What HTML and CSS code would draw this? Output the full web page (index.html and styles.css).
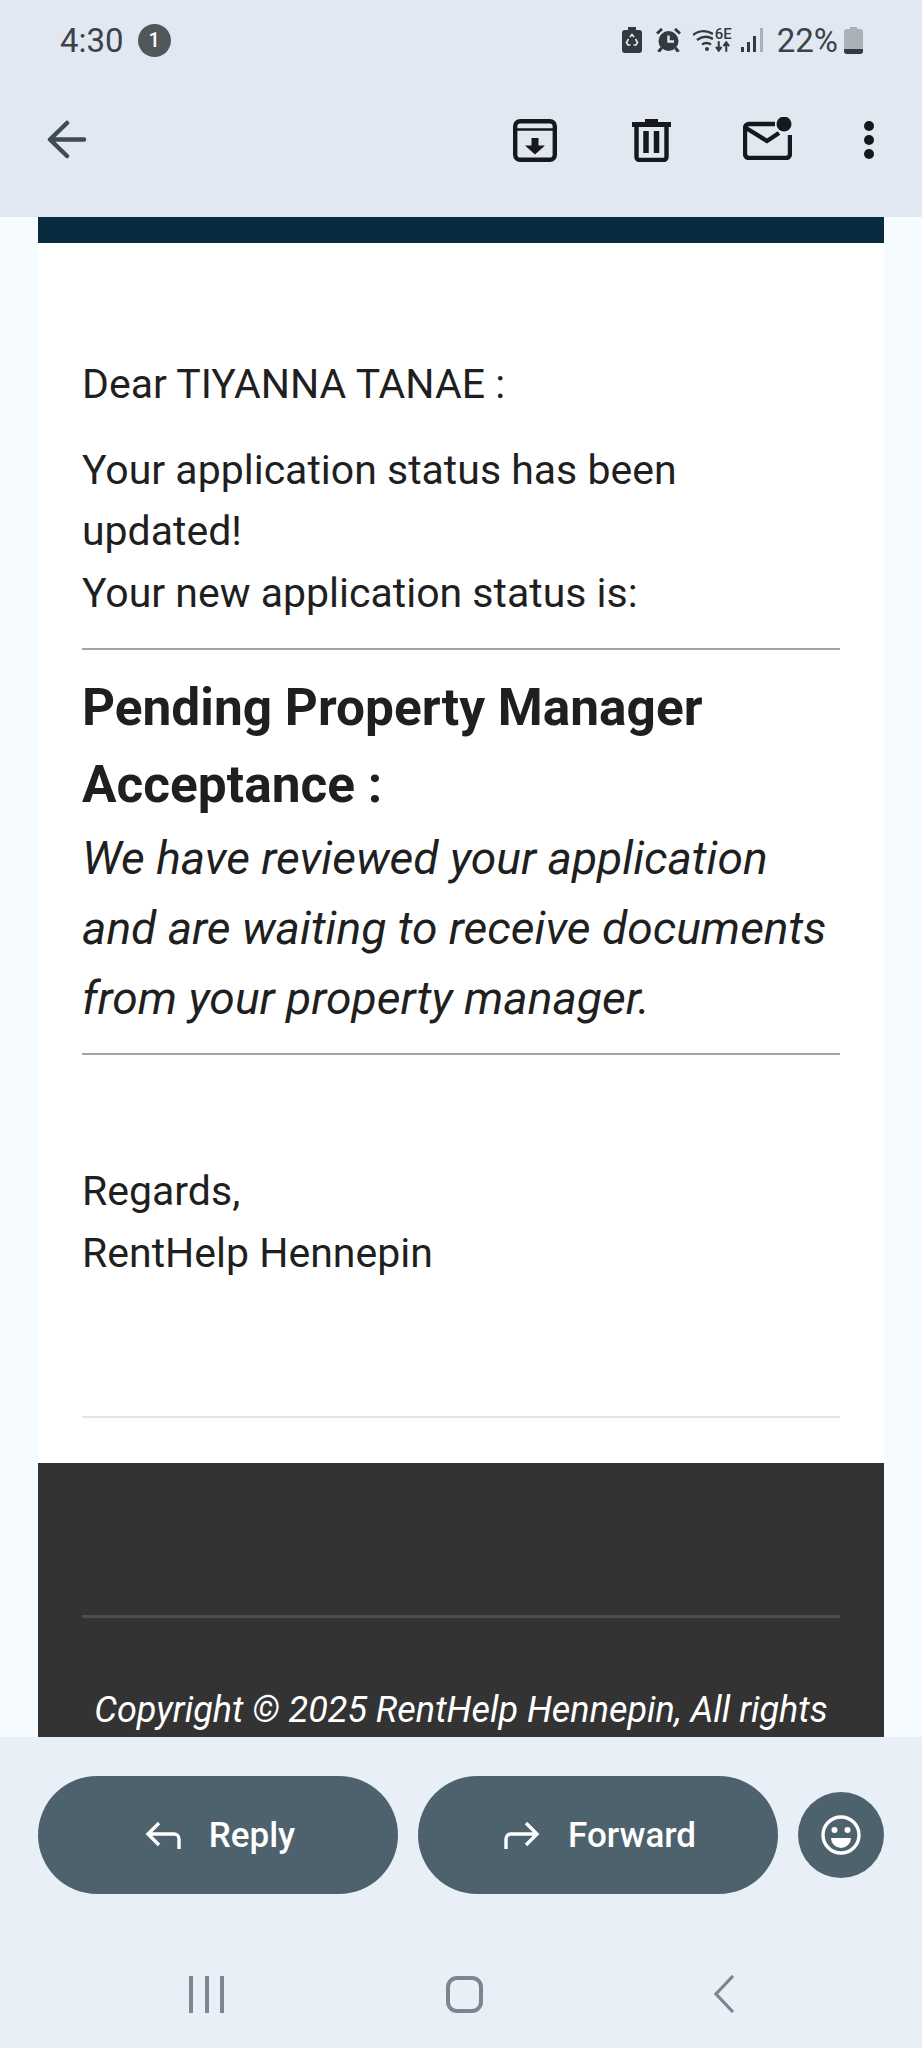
FILE: index.html
```html
<!DOCTYPE html>
<html lang="en">
<head>
  <meta charset="UTF-8">
  <title>RentHelp Hennepin - Application status</title>
  <meta name="viewport" content="width=device-width, initial-scale=1">
  <link rel="stylesheet" href="styles.css">
</head>
<body>
  <div class="phone">
    <header class="top">
      <div class="status-bar">
        <div class="status-left">
          <span class="clock">4:30</span>
          <span class="notif-badge">1</span>
        </div>
        <div class="status-right">
          <svg class="st-recycle" viewBox="0 0 20 26"><path fill="#33393f" d="M6 0h8v3h3a3 3 0 0 1 3 3v17a3 3 0 0 1-3 3H3a3 3 0 0 1-3-3V6a3 3 0 0 1 3-3h3z"/><path fill="none" stroke="#e1e8f1" stroke-width="1.700" d="M8 10l2-2.500 2 2.500M13.500 12l2 3.500-1.500 2.500h-2.500M6.500 12l-2 3.500 1.500 2.500h2.500"/></svg>
          <svg class="st-alarm" viewBox="0 0 25 24"><circle cx="12.500" cy="13" r="10" fill="#33393f"/><path d="M12.500 7.500v6h5.500" fill="none" stroke="#e1e8f1" stroke-width="2.400"/><path d="M1 5.500l5-4.500M24 5.500l-5-4.500M5.500 20l-3 4M19.500 20l3 4" stroke="#33393f" stroke-width="3"/></svg>
          <svg class="st-wifi" viewBox="0 0 20 24"><path d="M0 7c6-5 14-5 20-1M4 12c5-4 11-4 16-1M9 16.500c3-2 6-2 9 0" fill="none" stroke="#33393f" stroke-width="2.400"/><circle cx="14" cy="21" r="2" fill="#33393f"/></svg>
          <div class="st-net">
            <span class="st-6e">6E</span>
            <svg viewBox="0 0 16 11"><path d="M4 0v9M1 6l3 4 3-4M12 11V2M9 5l3-4 3 4" fill="none" stroke="#33393f" stroke-width="2.200"/></svg>
          </div>
          <svg class="st-signal" viewBox="0 0 23 24"><rect x="0" y="19" width="3" height="5" fill="#33393f"/><rect x="6" y="14" width="3" height="10" fill="#33393f"/><rect x="12" y="8" width="3" height="16" fill="#33393f"/><rect x="19" y="0" width="3" height="24" fill="#a9afb6"/></svg>
          <span class="battery-pct">22%</span>
          <svg class="st-battery" viewBox="0 0 19 27"><path fill="#abb1b8" d="M6 0h7v2h3a3 3 0 0 1 3 3v19a3 3 0 0 1-3 3H3a3 3 0 0 1-3-3V5a3 3 0 0 1 3-3h3z"/><path fill="#33393f" d="M0 22h19v2a3 3 0 0 1-3 3H3a3 3 0 0 1-3-3z"/></svg>
        </div>
      </div>
      <div class="toolbar">
        <svg class="tool-back" viewBox="0 0 40 40"><path d="M37 19.500H4M20 3L3 19.500 20 36" fill="none" stroke="#3e4a54" stroke-width="4.500" stroke-linecap="round" stroke-linejoin="round"/></svg>
        <div class="tool-actions">
          <svg class="tool-archive" viewBox="0 0 44 43"><rect x="2.200" y="2.200" width="39.600" height="38.600" rx="5" fill="none" stroke="#15191d" stroke-width="4.400"/><path d="M2 10.500h40" stroke="#15191d" stroke-width="2.500"/><path d="M18.500 19h7v7.500h6.500l-10 9-10-9h6.500z" fill="#15191d"/></svg>
          <svg class="tool-trash" viewBox="0 0 39 43"><path d="M0 5.500h39" stroke="#15191d" stroke-width="5"/><path d="M13 1.500h13" stroke="#15191d" stroke-width="3"/><path d="M4.500 6v32a3 3 0 0 0 3 3h24a3 3 0 0 0 3-3V6" fill="none" stroke="#15191d" stroke-width="4.400"/><path d="M14 12v22M24.500 12v22" stroke="#15191d" stroke-width="5.500"/></svg>
          <svg class="tool-mail" viewBox="0 0 49 43"><path d="M32 7H6a4 4 0 0 0-4 4v26a4 4 0 0 0 4 4h37a4 4 0 0 0 4-4V18" fill="none" stroke="#15191d" stroke-width="4.400"/><path d="M3 11l21 13 12-8" fill="none" stroke="#15191d" stroke-width="4.400"/><circle cx="41" cy="7" r="7.500" fill="#15191d"/></svg>
          <div class="tool-more"><i></i><i></i><i></i></div>
        </div>
      </div>
    </header>

    <main class="mail">
      <div class="card">
        <div class="card-strip"></div>
        <div class="card-body">
          <p class="greet">Dear TIYANNA TANAE :</p>
          <p class="intro">Your application status has been updated!<br>Your new application status is:</p>
          <hr class="rule">
          <h2 class="status-title">Pending Property Manager Acceptance :</h2>
          <p class="status-desc">We have reviewed your application and are waiting to receive documents from your property manager.</p>
          <hr class="rule rule-after">
          <p class="regards">Regards,<br>RentHelp Hennepin</p>
          <hr class="rule rule-light">
        </div>
        <footer class="card-foot">
          <hr class="foot-rule">
          <p class="copyright">Copyright © 2025 RentHelp Hennepin, All rights</p>
        </footer>
      </div>
    </main>

    <div class="actions">
      <button class="pill">
        <svg viewBox="0 0 36 27"><path d="M34 27V17a5 5 0 0 0-5-5H3M14 1L3 12l11 11" fill="none" stroke="#fff" stroke-width="3.400"/></svg>
        Reply
      </button>
      <button class="pill">
        <svg viewBox="0 0 36 27"><path d="M2 27V17a5 5 0 0 1 5-5h26M22 1l11 11-11 11" fill="none" stroke="#fff" stroke-width="3.400"/></svg>
        Forward
      </button>
      <button class="emoji-btn">
        <svg viewBox="0 0 40 40"><circle cx="20" cy="20" r="18" fill="none" stroke="#fff" stroke-width="3.400"/><circle cx="13.500" cy="15" r="3" fill="#fff"/><circle cx="26.500" cy="15" r="3" fill="#fff"/><path d="M10 23h20a10 10 0 0 1-20 0z" fill="#fff"/></svg>
      </button>
    </div>

    <nav class="nav-bar">
      <div class="nav-recent"><i></i><i></i><i></i></div>
      <div class="nav-home"></div>
      <svg class="nav-back" viewBox="0 0 22 38"><path d="M20 1L3 19l17 18" fill="none" stroke="#7c8690" stroke-width="3.200"/></svg>
    </nav>
  </div>
</body>
</html>
```

FILE: styles.css
```css
* {
  box-sizing: border-box;
}

body {
  margin: 0;
  background: #f6fbff;
  font-family: Roboto, sans-serif;
  color: #1f1f1f;
}

.phone {
  width: 922px;
  height: 2048px;
  display: flex;
  flex-direction: column;
  overflow: hidden;
}

/* status bar + toolbar */
.top {
  height: 217px;
  background: #e1e8f1;
  flex-shrink: 0;
}

.status-bar {
  height: 80px;
  display: flex;
  justify-content: space-between;
  align-items: center;
  padding: 0 59px 0 60px;
}

.status-left {
  display: flex;
  align-items: center;
  gap: 14px;
}

.clock {
  font-size: 33px;
  color: #3c4248;
}

.notif-badge {
  width: 33px;
  height: 33px;
  border-radius: 50%;
  background: #52575c;
  color: #fff;
  font-size: 20px;
  font-weight: 500;
  display: flex;
  align-items: center;
  justify-content: center;
}

.status-right {
  display: flex;
  align-items: center;
}

.status-right svg {
  display: block;
}

.st-recycle {
  width: 20px;
  height: 26px;
  margin-right: 14px;
}

.st-alarm {
  width: 25px;
  height: 24px;
  margin-right: 12px;
}

.st-wifi {
  width: 20px;
  height: 24px;
  margin-right: 2px;
}

.st-net {
  width: 15px;
  margin-right: 11px;
  color: #33393f;
}

.st-6e {
  display: block;
  font-size: 15px;
  line-height: 13px;
  font-weight: 500;
  text-align: center;
}

.st-net svg {
  width: 15px;
  height: 11px;
}

.st-signal {
  width: 23px;
  height: 24px;
  margin-right: 13px;
}

.battery-pct {
  font-size: 33px;
  color: #3c4248;
  margin-right: 6px;
}

.st-battery {
  width: 19px;
  height: 27px;
}

.toolbar {
  height: 120px;
  display: flex;
  align-items: center;
  justify-content: space-between;
  padding: 0 48px 0 47px;
}

.tool-back {
  width: 40px;
  height: 40px;
}

.tool-actions {
  display: flex;
  align-items: center;
  gap: 72px;
}

.tool-archive {
  width: 44px;
  height: 43px;
  margin-right: 3px;
}

.tool-trash {
  width: 39px;
  height: 43px;
}

.tool-mail {
  width: 49px;
  height: 43px;
  margin-top: -4px;
}

.tool-more {
  width: 10px;
  display: flex;
  flex-direction: column;
  gap: 4px;
}

.tool-more i {
  width: 10px;
  height: 10px;
  border-radius: 50%;
  background: #15191d;
}

/* email */
.mail {
  flex: 1;
  min-height: 0;
  padding: 0 38px;
  overflow: hidden;
}

.card {
  background: #fff;
}

.card-strip {
  height: 26px;
  background: #072c40;
}

.card-body {
  padding: 111px 44px 45px;
  font-size: 41px;
  line-height: 61.500px;
}

.card-body p {
  margin: 0;
}

.card-body .intro {
  margin-top: 24px;
}

.rule {
  border: 0;
  border-top: 2px solid #a3a3a3;
  margin: 24px 0 0;
}

.rule-after {
  margin-top: 20px;
}

.status-title {
  margin: 20px 0 0;
  font-size: 51.400px;
  line-height: 76.500px;
  font-weight: 700;
}

.card-body .status-desc {
  font-size: 46.200px;
  line-height: 70px;
  font-style: italic;
}

.card-body .regards {
  margin-top: 106px;
}

.rule-light {
  border-top-color: #e5e5e5;
  margin-top: 132px;
}

.card-foot {
  background: #333;
  height: 400px;
  padding: 152px 44px 0;
  color: #fff;
}

.foot-rule {
  border: 0;
  border-top: 3px solid #4d4d4d;
  margin: 0;
}

.copyright {
  margin: 66px -10px 0;
  font-size: 36px;
  line-height: 52px;
  font-style: italic;
  text-align: center;
}

/* reply / forward */
.actions {
  height: 196px;
  flex-shrink: 0;
  background: #e9eff7;
  display: flex;
  align-items: center;
  gap: 20px;
  padding: 0 38px;
}

.pill {
  width: 360px;
  height: 118px;
  border: none;
  border-radius: 59px;
  padding: 0 0 0 4px;
  background: #4e626e;
  color: #fff;
  font-family: Roboto, sans-serif;
  font-size: 35px;
  font-weight: 500;
  display: flex;
  align-items: center;
  justify-content: center;
  gap: 28px;
}

.pill svg {
  width: 36px;
  height: 27px;
}

.emoji-btn {
  width: 86px;
  height: 86px;
  border: none;
  border-radius: 50%;
  background: #4e626e;
  padding: 0;
  display: flex;
  align-items: center;
  justify-content: center;
}

.emoji-btn svg {
  width: 40px;
  height: 40px;
}

/* android nav */
.nav-bar {
  height: 115px;
  flex-shrink: 0;
  background: #e9eff7;
  display: flex;
  align-items: flex-start;
  justify-content: space-between;
  padding: 43px 187px 0 189px;
}

.nav-recent {
  width: 35px;
  height: 37px;
  display: flex;
  justify-content: space-between;
}

.nav-recent i {
  width: 4px;
  height: 37px;
  background: #7c8690;
}

.nav-home {
  width: 37px;
  height: 37px;
  border: 4px solid #7c8690;
  border-radius: 11px;
}

.nav-back {
  width: 22px;
  height: 38px;
  margin: -1px 0 0 8px;
}
```
